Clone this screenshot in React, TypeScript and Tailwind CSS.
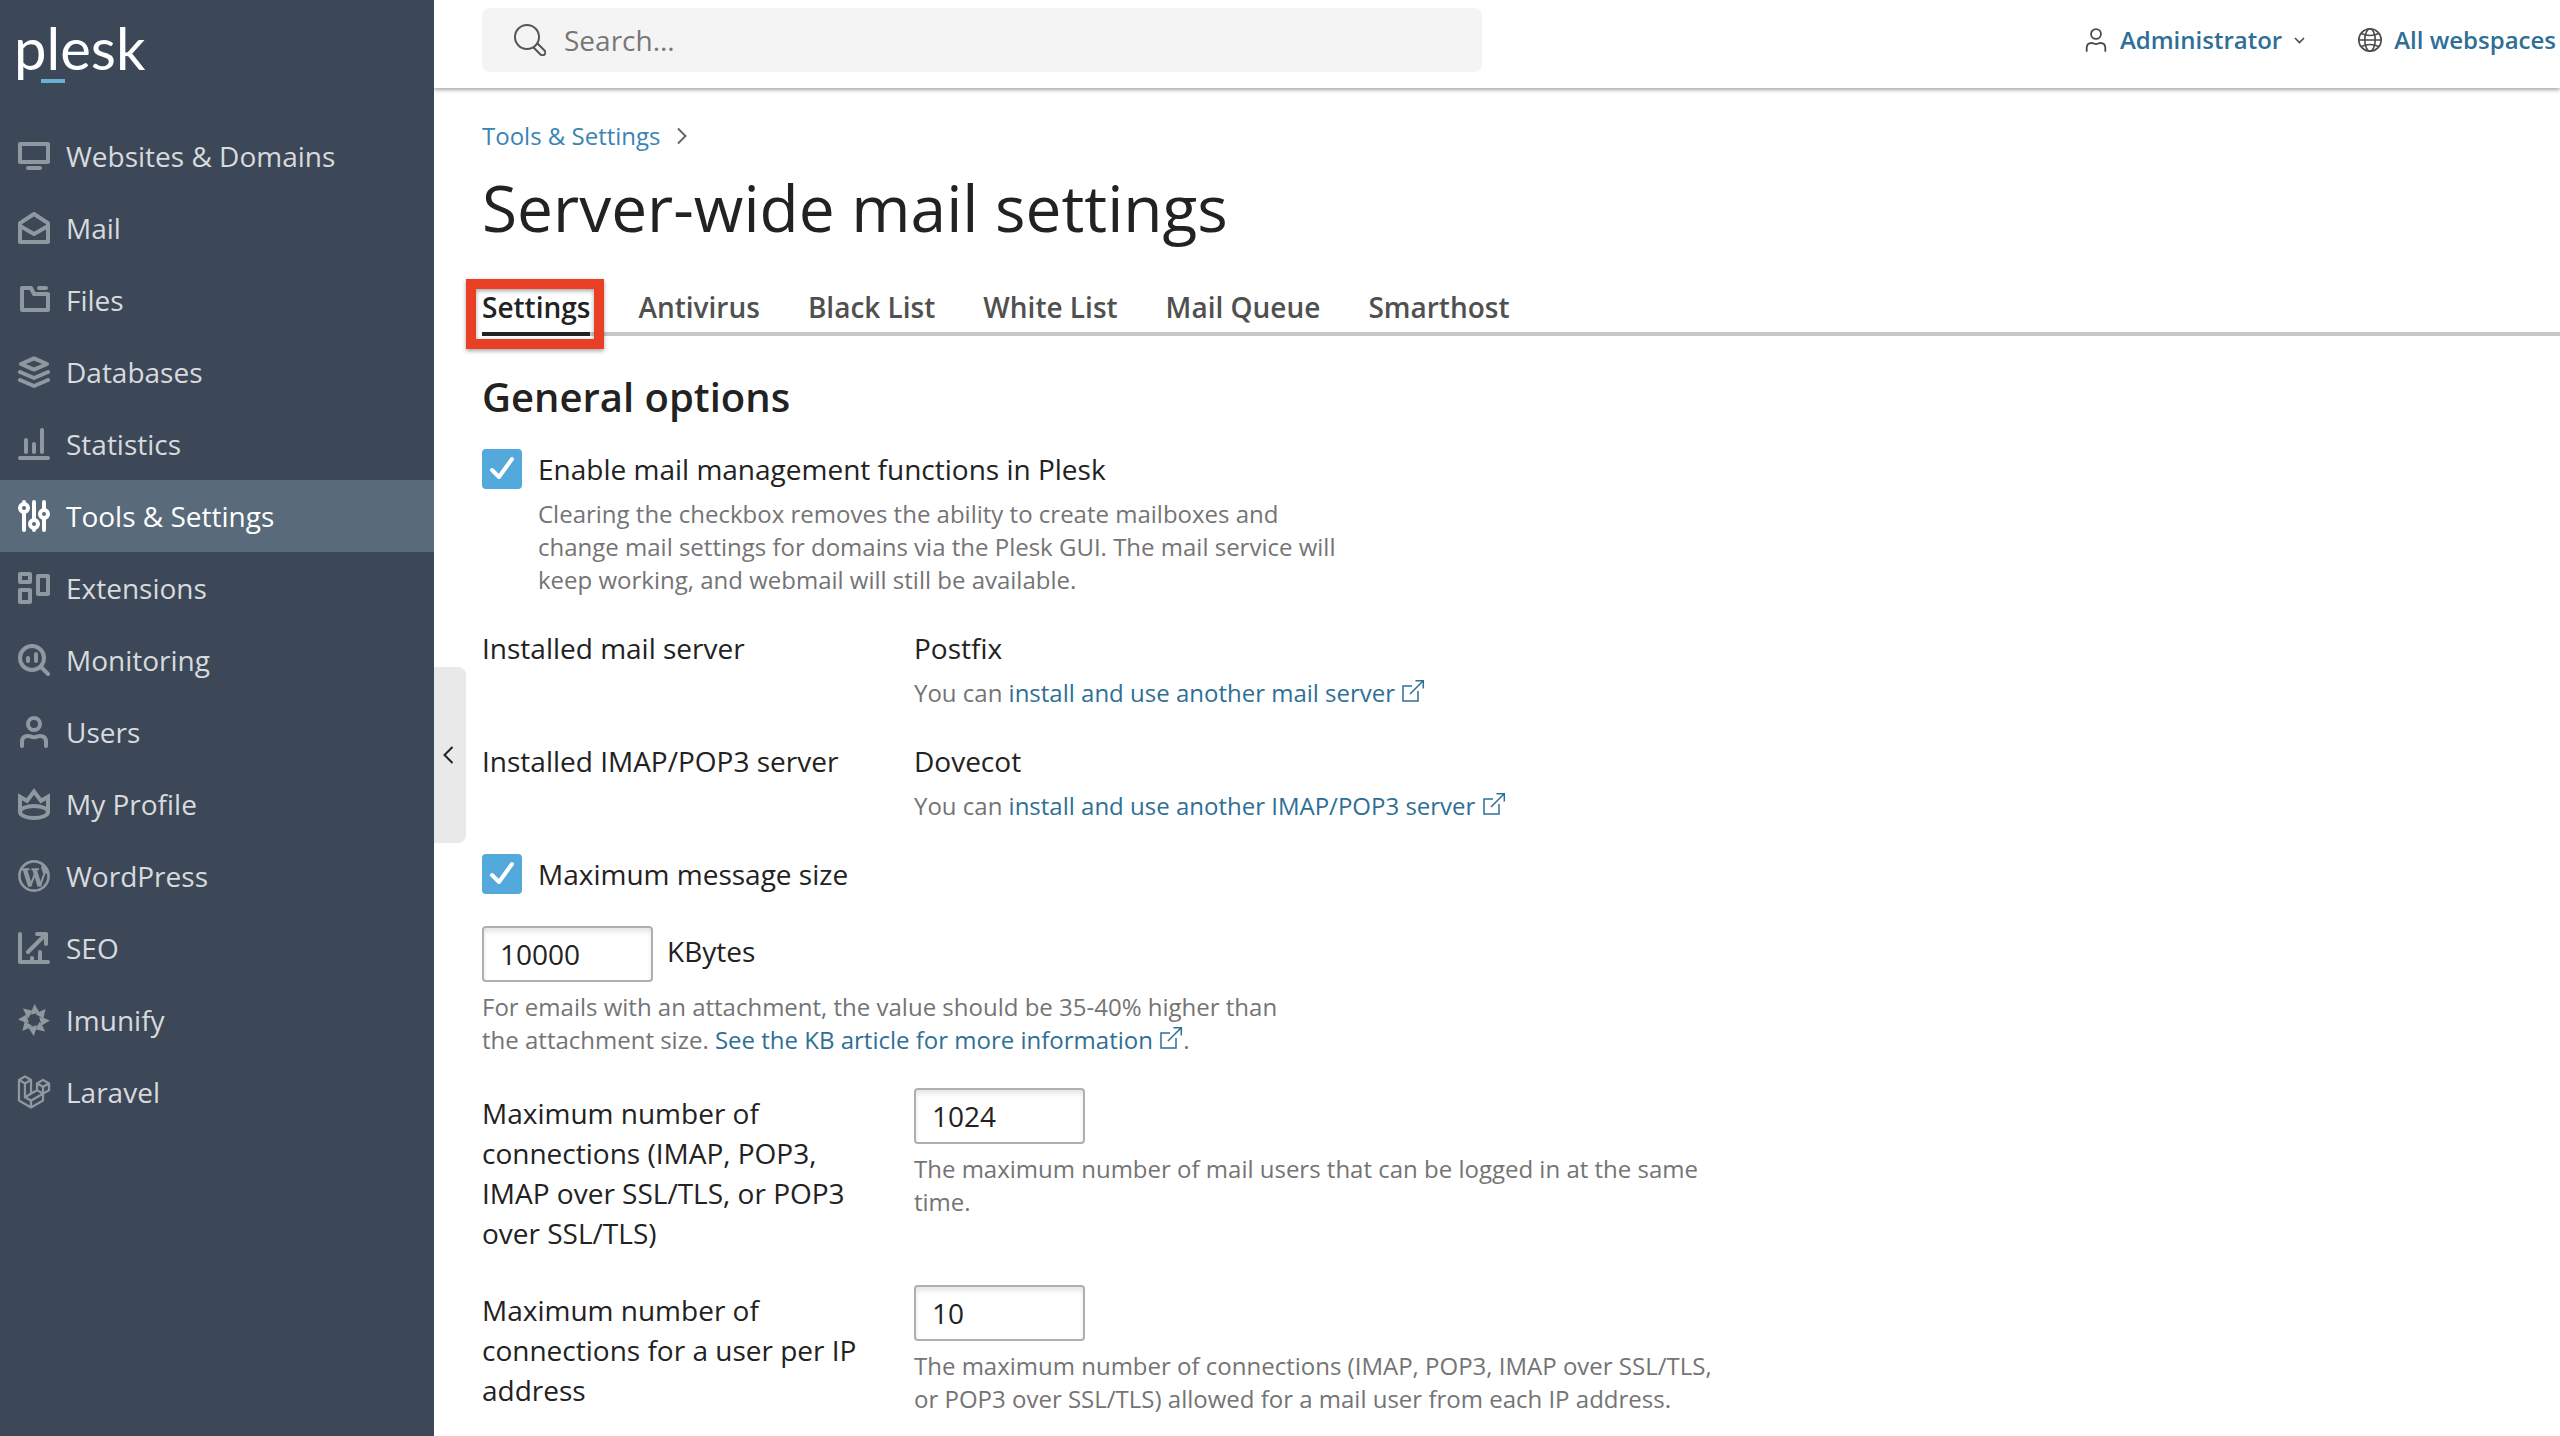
import type { ReactNode } from 'react';
import { FaLaravel } from 'react-icons/fa';

function Glyph({ children, className = 'size-8' }: { children: ReactNode; className?: string }) {
  return (
    <svg
      viewBox="0 0 16 16"
      className={`shrink-0 ${className}`}
      fill="none"
      stroke="currentColor"
      strokeWidth="2"
      strokeLinecap="round"
      strokeLinejoin="round"
      aria-hidden="true"
    >
      {children}
    </svg>
  );
}

const userBody = 'M2 15v-2c0-2 1-3 3-3c1.500 0 1.500 .6 3 .6s1.500-.6 3-.6c2 0 3 1 3 3v2';

const menu: { label: string; icon: ReactNode; active?: boolean }[] = [
  {
    label: 'Websites & Domains',
    icon: (
      <Glyph>
        <path d="M1 2h14v9H1zM5 14h6" />
      </Glyph>
    ),
  },
  {
    label: 'Mail',
    icon: (
      <Glyph>
        <path d="M1 5.600L8 1l7 4.600V15H1zM1 7l7 4l7-4" />
      </Glyph>
    ),
  },
  {
    label: 'Files',
    icon: (
      <Glyph>
        <path d="M2 2h4.500L8 5h7v8H2zM10.500 2H14" />
      </Glyph>
    ),
  },
  {
    label: 'Databases',
    icon: (
      <Glyph>
        <path d="M1.500 4L8 1.200L14.500 4L8 6.800zM1 8l7 3l7-3M1 12l7 3l7-3" />
      </Glyph>
    ),
  },
  {
    label: 'Statistics',
    icon: (
      <Glyph>
        <path d="M1 15h14M4 6v6M8 8v4M12 1v11" />
      </Glyph>
    ),
  },
  {
    label: 'Tools & Settings',
    active: true,
    icon: (
      <Glyph>
        <path d="M3 1v1M3 6v9M8 1v9M8 14v1M13 1v4M13 9v6" />
        <circle cx="3" cy="4" r="2" />
        <circle cx="8" cy="12" r="2" />
        <circle cx="13" cy="7" r="2" />
      </Glyph>
    ),
  },
  {
    label: 'Extensions',
    icon: (
      <Glyph>
        <path d="M1 1h5v4H1zM1 9h5v6H1zM10 2h5v9h-5z" />
      </Glyph>
    ),
  },
  {
    label: 'Monitoring',
    icon: (
      <Glyph>
        <circle cx="7" cy="7" r="6" />
        <path d="M11.500 11.500L15 15M5 7v1.500M9 5v3.500" />
      </Glyph>
    ),
  },
  {
    label: 'Users',
    icon: (
      <Glyph>
        <circle cx="8" cy="4" r="3" />
        <path d={userBody} />
      </Glyph>
    ),
  },
  {
    label: 'My Profile',
    icon: (
      <Glyph>
        <path strokeLinejoin="miter" strokeLinecap="butt" d="M1 12.200V4.400l3.500 2L8 1.800l3.500 4.600l3.500-2v7.800" />
        <ellipse cx="8" cy="12" rx="7" ry="3" />
      </Glyph>
    ),
  },
  {
    label: 'WordPress',
    icon: (
      <Glyph>
        <circle cx="8" cy="8" r="7.300" strokeWidth="1.300" />
        <g strokeLinecap="butt" strokeLinejoin="miter">
          <path strokeWidth="1" d="M1.800 4.600h4M6.700 4.600h3.800M6.100 13.200l2.400-6.400M10.900 13.200l2.500-7" />
          <path strokeWidth="2.200" d="M3.400 4.600l2.700 8.600M8.200 4.600l2.700 8.600M12.800 3c-.5 1.500 1 2 .6 3.800" />
        </g>
      </Glyph>
    ),
  },
  {
    label: 'SEO',
    icon: (
      <Glyph>
        <path d="M1 1v14h14M5 10l9-9M9.500 1H14v5M7 13v1M11 10v4" />
      </Glyph>
    ),
  },
  {
    label: 'Imunify',
    icon: (
      <Glyph>
        <g fill="currentColor" stroke="none">
          {[0, 45, 90, 135, 180, 225, 270, 315].map((angle) => (
            <path key={angle} d="M8.200 0L10.800 4.200L6.600 5.400L6.900 3.400z" transform={`rotate(${angle} 8 8)`} />
          ))}
        </g>
      </Glyph>
    ),
  },
  { label: 'Laravel', icon: <FaLaravel strokeWidth="20" className="size-8 shrink-0 overflow-visible" aria-hidden="true" /> },
];

const tabs = ['Settings', 'Antivirus', 'Black List', 'White List', 'Mail Queue', 'Smarthost'];

function ExternalLink({ children }: { children: ReactNode }) {
  return (
    <a href="#" className="text-[#2f6f96]">
      {children}{' '}
      <svg
        viewBox="0 0 24 24"
        className="inline-block size-6 align-baseline"
        fill="none"
        stroke="currentColor"
        strokeWidth="1.500"
        aria-hidden="true"
      >
        <path d="M11 8H2v15h15V13M9 16L22 3M14.500 2.700h7.800v7.800" />
      </svg>
    </a>
  );
}

function Hint({ children }: { children: ReactNode }) {
  return <p className="mt-2 max-w-[800px] text-2xl leading-[33px] text-[#747474]">{children}</p>;
}

function CheckField({ id, label, children }: { id: string; label: string; children?: ReactNode }) {
  return (
    <div className="flex items-start gap-4">
      <span className="relative size-10 shrink-0">
        <input
          id={id}
          type="checkbox"
          defaultChecked
          className="peer block size-10 appearance-none rounded-sm border-2 border-[#afafaf] checked:border-[#53a8dc] checked:bg-[#53a8dc]"
        />
        <svg
          viewBox="0 0 40 40"
          className="pointer-events-none absolute inset-0 hidden size-10 peer-checked:block"
          fill="none"
          stroke="white"
          strokeWidth="4"
          strokeLinecap="round"
          strokeLinejoin="round"
          aria-hidden="true"
        >
          <path d="M10 21l7 7L30 10" />
        </svg>
      </span>
      <div>
        <label htmlFor={id} className="block">
          {label}
        </label>
        {children}
      </div>
    </div>
  );
}

function NumberBox({ id, value, label }: { id: string; value: string; label?: string }) {
  return (
    <input
      id={id}
      type="text"
      inputMode="numeric"
      defaultValue={value}
      aria-label={label}
      className="block h-14 w-[171px] rounded-sm border-2 border-[#afafaf] bg-white px-4 shadow-[inset_0_4px_4px_#e8e8e8]"
    />
  );
}

export default function App() {
  return (
    <div className="flex h-screen overflow-hidden bg-white font-['Open_Sans',sans-serif] text-[28px] leading-10 text-[#222222]">
      <aside className="relative z-10 w-[434px] shrink-0 bg-[#3c4858]">
        <div className="flex h-[120px] items-start pl-[14px] pt-3">
          <a href="#" className="relative font-['Lato',sans-serif] text-[58px] leading-[72px] text-white">
            plesk
            <span className="absolute left-[27px] top-[67px] h-1 w-6 bg-[#66b2d2]" />
          </a>
        </div>
        <nav>
          <ul>
            {menu.map((item) => (
              <li key={item.label}>
                <a
                  href="#"
                  className={
                    item.active
                      ? 'flex h-[72px] items-center gap-4 bg-[#596a7b] pl-[18px] text-white'
                      : 'flex h-[72px] items-center gap-4 pl-[18px] text-[#d8dadd]'
                  }
                >
                  <span className={item.active ? 'text-white' : 'text-[#8e989f]'}>{item.icon}</span>
                  {item.label}
                </a>
              </li>
            ))}
          </ul>
        </nav>
        <button
          type="button"
          aria-label="Collapse sidebar"
          className="absolute left-full top-[667px] flex h-44 w-8 items-center rounded-r-lg bg-[#e9e9e9] pl-2"
        >
          <svg viewBox="0 0 12 20" className="h-5 w-3" fill="none" stroke="#222222" strokeWidth="2" aria-hidden="true">
            <path d="M10.500 2L2.500 10l8 8" />
          </svg>
        </button>
      </aside>

      <div className="flex min-w-0 grow flex-col">
        <header className="flex h-[88px] shrink-0 items-start justify-between pl-12 pr-1 pt-2 shadow-[0_2px_4px_rgba(0,0,0,0.35)]">
          <label className="flex h-16 w-[1000px] items-center gap-[18px] rounded-lg bg-[#f4f4f4] pl-8">
            <svg
              viewBox="0 0 32 32"
              className="size-8 shrink-0"
              fill="none"
              stroke="#555555"
              strokeWidth="2"
              strokeLinejoin="round"
              aria-hidden="true"
            >
              <circle cx="13" cy="13" r="12" />
              <path d="M19.500 23.500l7 7a2.500 2.500 0 0 0 4-4l-7-7" />
            </svg>
            <input
              type="search"
              aria-label="Search"
              placeholder="Search..."
              className="w-full bg-transparent outline-none placeholder:text-[#777777]"
            />
          </label>
          <div className="flex h-16 items-center gap-[52px] text-2xl font-semibold text-[#2f6f96]">
            <button type="button" className="flex items-center gap-3">
              <svg viewBox="0 0 16 16" className="size-6" fill="none" stroke="#4a4a4a" strokeWidth="1.200" strokeLinecap="round" aria-hidden="true">
                <circle cx="8" cy="4" r="3.300" />
                <path d="M1.800 15.400v-2c0-2.200 1.200-3.400 3.200-3.400c1.500 0 1.500 .7 3 .7s1.500-.7 3-.7c2 0 3.200 1.200 3.200 3.400v2" />
              </svg>
              Administrator
              <svg viewBox="0 0 12 12" className="size-3" fill="none" stroke="#4a4a4a" strokeWidth="1.600" aria-hidden="true">
                <path d="M1 4L5.500 8.500L10 4" />
              </svg>
            </button>
            <a href="#" className="flex items-center gap-3">
              <svg viewBox="0 0 24 24" className="size-6" fill="none" stroke="#4a4a4a" strokeWidth="1.600" aria-hidden="true">
                <circle cx="12" cy="12" r="11.200" />
                <ellipse cx="12" cy="12" rx="5.200" ry="11.200" />
                <path d="M1 12h22M3.500 5.500c5 2.600 12 2.600 17 0M3.500 18.500c5-2.600 12-2.600 17 0" />
              </svg>
              All webspaces
            </a>
          </div>
        </header>

        <main className="grow pl-12 pt-[31px]">
          <nav aria-label="Breadcrumb" className="flex items-center gap-4 text-2xl leading-[33px]">
            <a href="#" className="text-[#3a83b3]">
              Tools &amp; Settings
            </a>
            <svg viewBox="0 0 10 18" className="h-[18px] w-[10px]" fill="none" stroke="#666666" strokeWidth="2" aria-hidden="true">
              <path d="M1 1.500L8.500 9L1 16.500" />
            </svg>
          </nav>
          <h1 className="mt-4 text-[64px] leading-[80px]">Server-wide mail settings</h1>

          <div role="tablist" className="mt-[39px] flex gap-12 font-semibold shadow-[inset_0_-4px_0_#c8c8c8]">
            {tabs.map((tab, index) => (
              <div key={tab} className="relative">
                <button
                  type="button"
                  role="tab"
                  aria-selected={index === 0}
                  className={
                    index === 0
                      ? 'block border-b-4 border-[#222222] pb-[5px] text-[#222222]'
                      : 'block border-b-4 border-transparent pb-[5px] text-[#505050]'
                  }
                >
                  {tab}
                </button>
                {index === 0 && (
                  <span className="pointer-events-none absolute -bottom-[13px] -left-4 -right-[14px] -top-2 border-10 border-[#e94025] shadow-[0_2px_4px_rgba(0,0,0,0.35),inset_0_2px_4px_rgba(0,0,0,0.35)]" />
                )}
              </div>
            ))}
          </div>

          <h2 className="mt-[37px] text-[40px] font-semibold leading-[48px]">General options</h2>

          <form className="mt-7 flex flex-col gap-8">
            <CheckField id="mail-enabled" label="Enable mail management functions in Plesk">
              <Hint>
                Clearing the checkbox removes the ability to create mailboxes and change mail settings for domains via
                the Plesk GUI. The mail service will keep working, and webmail will still be available.
              </Hint>
            </CheckField>

            <div className="flex gap-8">
              <div className="w-[400px] shrink-0">Installed mail server</div>
              <div>
                Postfix
                <Hint>
                  You can <ExternalLink>install and use another mail server</ExternalLink>
                </Hint>
              </div>
            </div>

            <div className="flex gap-8">
              <div className="w-[400px] shrink-0">Installed IMAP/POP3 server</div>
              <div>
                Dovecot
                <Hint>
                  You can <ExternalLink>install and use another IMAP/POP3 server</ExternalLink>
                </Hint>
              </div>
            </div>

            <CheckField id="limit-size" label="Maximum message size" />

            <div>
              <div className="flex gap-[14px]">
                <NumberBox id="max-size" value="10000" label="Maximum message size in KBytes" />
                <label htmlFor="max-size" className="pt-[5px]">
                  KBytes
                </label>
              </div>
              <Hint>
                For emails with an attachment, the value should be 35-40% higher than the attachment size.{' '}
                <ExternalLink>See the KB article for more information</ExternalLink>.
              </Hint>
            </div>

            <div className="flex gap-8">
              <label htmlFor="max-connections" className="w-[400px] shrink-0 pt-[5px]">
                Maximum number of connections (IMAP, POP3, IMAP over SSL/TLS, or POP3 over SSL/TLS)
              </label>
              <div>
                <NumberBox id="max-connections" value="1024" />
                <Hint>The maximum number of mail users that can be logged in at the same time.</Hint>
              </div>
            </div>

            <div className="flex gap-8">
              <label htmlFor="max-per-ip" className="w-[400px] shrink-0 pt-[5px]">
                Maximum number of connections for a user per IP address
              </label>
              <div>
                <NumberBox id="max-per-ip" value="10" />
                <Hint>
                  The maximum number of connections (IMAP, POP3, IMAP over SSL/TLS, or POP3 over SSL/TLS) allowed for a
                  mail user from each IP address.
                </Hint>
              </div>
            </div>
          </form>
        </main>
      </div>
    </div>
  );
}
